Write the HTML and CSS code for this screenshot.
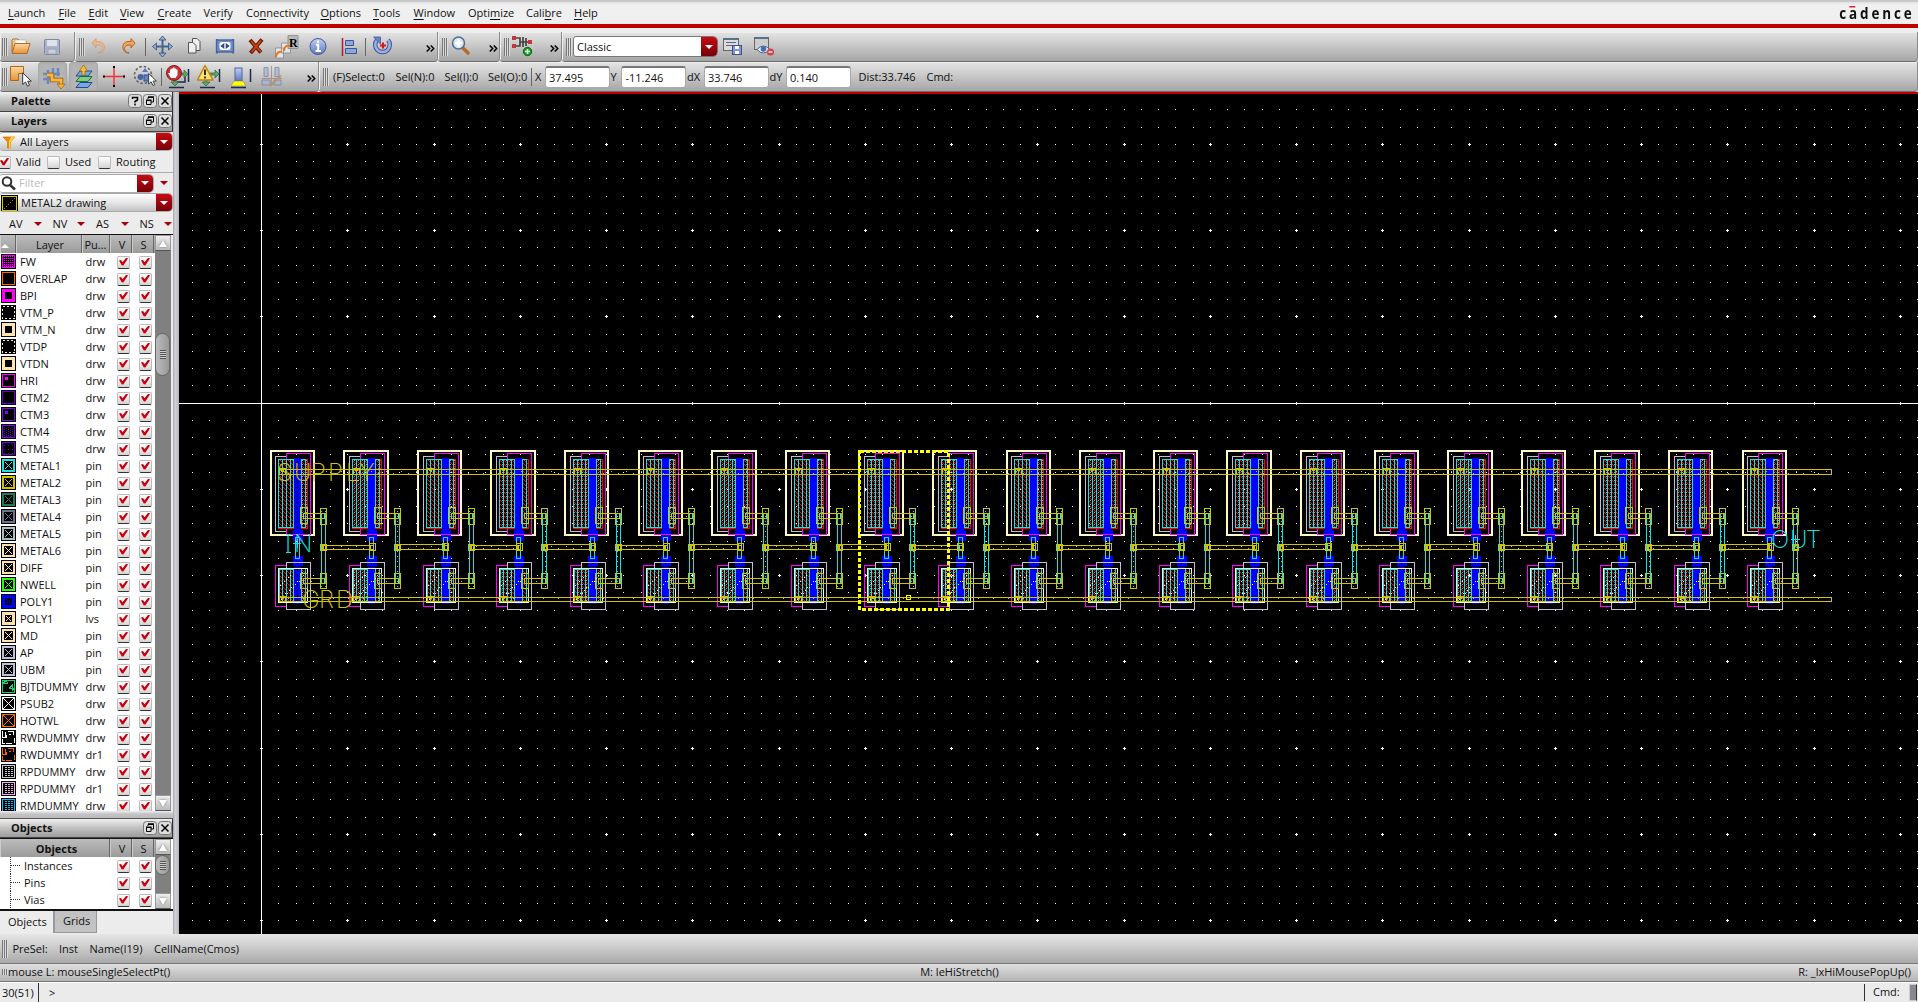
FILE: index.html
```html
<!DOCTYPE html>
<html lang="en">
<head>
<meta charset="utf-8">
<title>Layout Editor</title>
<link rel="stylesheet" href="styles.css">
</head>
<body>
<svg width="0" height="0" class="defs">
  <defs>
    <linearGradient id="blueG" x1="0" y1="0" x2="0" y2="1"><stop offset="0" stop-color="#c3d0f2"/><stop offset="1" stop-color="#5c78bd"/></linearGradient>
    <linearGradient id="orangeG" x1="0" y1="0" x2="0" y2="1"><stop offset="0" stop-color="#ffd9a0"/><stop offset="1" stop-color="#e8903a"/></linearGradient>
    <symbol id="grip" viewBox="0 0 6 18"><path d="M.5 0V18M2.5 0V18M4.5 0V18" stroke="#777" stroke-width="1"/><path d="M1.500 0V18M3.500 0V18M5.500 0V18" stroke="#ddd" stroke-width="1"/></symbol>
    <symbol id="more" viewBox="0 0 9 7"><path d="M.7 .5L3.700 3.500L.7 6.500M4.700 .5L7.700 3.500L4.700 6.500" stroke="#000" stroke-width="1.500" fill="none"/></symbol>
    <symbol id="float" viewBox="0 0 14 14"><rect x=".5" y=".5" width="13" height="13" rx="3" fill="#ddd" stroke="#777"/><path d="M5 3.500H10.500V8M5 3.500V5M3.500 6.500H8V10.500H3.500ZM8 8H10.500" stroke="#000" fill="none"/><path d="M5 3H11M3 6.300H8.500" stroke="#000" stroke-width="1.500"/></symbol>
    <symbol id="close" viewBox="0 0 14 14"><rect x=".5" y=".5" width="13" height="13" rx="3" fill="#ddd" stroke="#777"/><path d="M3.500 3.500L10.500 10.500M10.500 3.500L3.500 10.500" stroke="#000" stroke-width="1.500"/></symbol>
    <symbol id="help" viewBox="0 0 14 14"><rect x=".5" y=".5" width="13" height="13" rx="3" fill="#ddd" stroke="#777"/><path d="M4.500 5V3.500H9.500V6L7 7.500V8.500M7 9.500V11.500" stroke="#000" stroke-width="1.500" fill="none"/></symbol>
    <symbol id="cursor" viewBox="0 0 10 15"><path d="M.7 .8V12.500L3.500 10L5.500 14.200L7.500 13.200L5.700 9.200H9.300Z" fill="#fff" stroke="#222" stroke-width=".9"/></symbol>
  </defs>
</svg>

<div class="app">
  <nav class="menubar">
    <span style="width:50.500px"><u>L</u>aunch</span><span style="width:30px"><u>F</u>ile</span><span style="width:31.500px"><u>E</u>dit</span><span style="width:37.500px"><u>V</u>iew</span><span style="width:46px"><u>C</u>reate</span><span style="width:42.500px">Ver<u>i</u>fy</span><span style="width:74.500px">Co<u>n</u>nectivity</span><span style="width:52.500px"><u>O</u>ptions</span><span style="width:40.500px"><u>T</u>ools</span><span style="width:54.500px"><u>W</u>indow</span><span style="width:58px">Opti<u>m</u>ize</span><span style="width:48px">Cali<u>b</u>re</span><span><u>H</u>elp</span>
    <b class="brand">c<em>a</em>dence</b>
  </nav>

  <div class="toolbar top">
    <div class="group" style="width:75px">
      <svg class="grip"><use href="#grip"/></svg>
      <svg width="28" height="29" viewBox="10 0 28 29"><path d="M12 20V8l1-1h5l2 2h6v3" fill="url(#orangeG)" stroke="#b36a22"/><path d="M15 12V8h11v5" fill="#fff" stroke="#aaa" stroke-width=".6"/><path d="M12 21.500L15 11.500H30L27 21.500Z" fill="url(#orangeG)" stroke="#b36a22"/></svg>
      <svg width="32" height="29" viewBox="38 0 32 29"><rect x="44.500" y="7.500" width="15" height="15" rx="1" fill="#a9b2c8" stroke="#7d88a5"/><rect x="47" y="8" width="10" height="6" fill="#dfe2e8"/><rect x="48" y="17" width="8" height="5" fill="#c9cdd6" stroke="#8e97ae" stroke-width=".7"/></svg>
    </div>
    <div class="group" style="width:363px">
      <svg class="grip"><use href="#grip"/></svg>
      <svg width="26" height="29" viewBox="85 0 26 29"><path d="M98 21c6-1 7-8 0-8h-2v3l-4-5 4-4.500v3h3c8 1 7 12-1 11.500Z" fill="#e4b894" stroke="#cf976a" stroke-width=".7"/></svg>
      <svg width="34" height="29" viewBox="111 0 34 29"><path d="M129 21c-6-1-6-8 0-8h2v3l4-5-4-4.500v3h-3c-8 1-6 12 1 11.500Z" fill="#f2a555" stroke="#b05c17" stroke-width=".9"/></svg>
      <i class="sep"></i>
      <svg width="34" height="29" viewBox="146 0 34 29"><path d="M162.500 5V24M153 14.500H172" stroke="#46658a" stroke-width="2"/><path d="M162.500 4l-3.500 4h7ZM162.500 25l-3.500-4h7ZM152.500 14.500l4-3.500v7ZM172.500 14.500l-4-3.500v7Z" fill="#8fb0d4" stroke="#2e4f78" stroke-width=".8"/></svg>
      <svg width="30" height="29" viewBox="180 0 30 29"><path d="M192.500 6.500H197l3 3v9H192.500Z" fill="#eee" stroke="#555"/><path d="M188.500 10.500H193l3 3v7.500H188.500Z" fill="#eee" stroke="#555"/></svg>
      <svg width="33" height="29" viewBox="210 0 33 29"><rect x="216.500" y="8" width="17" height="12" fill="#6f8dc8" stroke="#45659f" stroke-width="1.400"/><path d="M217 8v-1M233 8v-1M217 20v1.500M233 20v1.500" stroke="#45659f" stroke-width="2"/><rect x="219.500" y="10" width="11" height="8" rx="2" fill="#fff"/><path d="M224.300 11v6l-4-3ZM225.700 11v6l4-3Z" fill="#2f4c87"/></svg>
      <svg width="28" height="29" viewBox="243 0 28 29"><path d="M250 8l11 12.500M262 7.500L250.500 21" stroke="#6a1c06" stroke-width="4"/><path d="M251 9l10 11M261 8.500L251.500 20" stroke="#c64413" stroke-width="1.800"/></svg>
      <svg width="35" height="29" viewBox="271 0 35 29"><path d="M275.500 16h8v10h-8ZM281.500 11h9v10h-9Z" fill="#e4e4e4" stroke="#888" stroke-width=".8"/><path d="M288 3.500h10v13h-10Z" fill="#b9b9b9" stroke="#888" stroke-width=".8"/><text x="289" y="14.500" class="svg-r">R</text><path d="M276 25c0-4 3-6 6-5M284 19c0-5 3-6 6-5" stroke="#e07b20" stroke-width="2" fill="none"/></svg>
      <svg width="30" height="29" viewBox="306 0 30 29"><circle cx="318" cy="14.500" r="8" fill="url(#blueG)" stroke="#3e55a0"/><path d="M318 8.500v2.500M316 12.800h2.200V19M315.500 19h5.500" stroke="#fff" stroke-width="2" fill="none"/></svg>
      <svg width="29" height="29" viewBox="336 0 29 29"><path d="M342.500 6V24" stroke="#b21c2c" stroke-width="1.500"/><path d="M345.500 8.500h8v5h-8ZM345.500 16.500h11v5h-11Z" fill="#8fa6d8" stroke="#3b5596"/></svg>
      <i class="sep"></i>
      <svg width="60" height="29" viewBox="366 0 60 29"><path d="M377 8a7.300 7.300 0 1 0 11 0" stroke="#3f57a0" stroke-width="4.500" fill="none"/><path d="M377 8a7.300 7.300 0 1 0 11 0" stroke="#9db0e0" stroke-width="2.500" fill="none"/><path d="M373.500 5h7v7Z" fill="#6d84c5" stroke="#3f57a0" stroke-width=".8"/><path d="M383 10.500v6M380 13.500h6" stroke="#e01414" stroke-width="2"/></svg>
      <svg class="more"><use href="#more"/></svg>
    </div>
    <div class="group" style="width:62px">
      <svg class="grip"><use href="#grip"/></svg>
      <svg width="41" height="29" viewBox="448 0 41 29"><path d="M463 16l5 5" stroke="#b66a28" stroke-width="3.500" stroke-linecap="round"/><circle cx="458.500" cy="11" r="6" fill="#d9e5f2" stroke="#526d93" stroke-width="1.500"/><path d="M458.500 7.500v7M455 11h7" stroke="#fff" stroke-width="2.500"/></svg>
      <svg class="more"><use href="#more"/></svg>
    </div>
    <div class="group" style="width:62px">
      <svg class="grip"><use href="#grip"/></svg>
      <svg width="40" height="29" viewBox="510 0 40 29"><path d="M514 6h6v8h-6M523 5v10M520 10h9M526 6v8" stroke="#444" stroke-width="1.700" fill="none"/><path d="M512 4h4v4h-4ZM512 12h4v4h-4ZM528 8h4v4h-4Z" fill="#c0363c"/><circle cx="527.500" cy="19.500" r="4.200" fill="#159b1f" stroke="#076b10"/><path d="M527.500 17v5M525 19.500h5" stroke="#fff" stroke-width="1.500"/></svg>
      <svg class="more"><use href="#more"/></svg>
    </div>
    <div class="group grow">
      <svg class="grip"><use href="#grip"/></svg>
      <div class="combo classic"><span>Classic</span><i class="arrow"></i></div>
      <svg width="31" height="29" viewBox="718 0 31 29"><rect x="723.500" y="6.500" width="15" height="12" fill="#ddd" stroke="#666"/><path d="M723 7h16" stroke="#52748d" stroke-width="2"/><path d="M726 10.500h10M726 13.500h6" stroke="#666"/><rect x="732.500" y="13.500" width="9" height="9" fill="#8295d6" stroke="#3d4f9d"/><path d="M735 14h4v3h-4ZM735 19h4v3h-4Z" fill="#fff"/></svg>
      <svg width="31" height="29" viewBox="749 0 31 29"><rect x="754.500" y="5.500" width="14" height="12" fill="#ccc" stroke="#666"/><path d="M754 6h15" stroke="#52748d" stroke-width="2"/><path d="M757 17.500q6-7 13 0q-7 7-13 0Z" fill="#e9eef7" stroke="#4a6596"/><circle cx="763.500" cy="17" r="2.800" fill="#456fae"/><circle cx="770.500" cy="20" r="3.600" fill="#d0454a"/><path d="M768.500 20h4" stroke="#fff" stroke-width="1.300"/></svg>
    </div>
  </div>

  <div class="toolbar second">
    <div class="group" style="width:319px">
      <svg class="grip"><use href="#grip"/></svg>
      <svg width="28" height="29" viewBox="10 0 28 29"><path d="M10.500 4.500h13v7h-5v7h-8Z" fill="url(#orangeG)" stroke="#b56517"/><use href="#cursor" x="22" y="10" width="10" height="15"/></svg>
      <svg class="pressed" width="29" height="29" viewBox="38 0 29 29"><path d="M48 8v14M53 6v14M58 6v8M43 12h17M43 17h14" stroke="#6d88c0" stroke-width="2.500"/><path d="M47 13h5v5h9v6" stroke="#9c5b08" stroke-width="4.500" fill="none"/><path d="M47 13h5v5h9v6" stroke="#f7b63c" stroke-width="2.800" fill="none"/><path d="M57 22h8l-4 5Z" fill="#f7b63c" stroke="#9c5b08" stroke-width=".7"/></svg>
      <svg class="pressed gap" width="29" height="29" viewBox="69 0 29 29"><path d="M83.500 24V9" stroke="#e8a626" stroke-width="3"/><path d="M76 25.500l4-5h12l-4 5Z" fill="#79a6e8" stroke="#234a8d"/><path d="M76 19.500l4-5h12l-4 5Z" fill="#7dcf7f" stroke="#1f7131"/><path d="M76 14l4-5h12l-4 5Z" fill="#79a6e8" stroke="#234a8d"/><path d="M79.500 9l4-6 4 6h-2.500v4h-3V9Z" fill="#f9c03e" stroke="#9c6b08" stroke-width=".8"/></svg>
      <svg width="31" height="29" viewBox="98 0 31 29"><path d="M114 4V25M103 14.500H125" stroke="#e33" stroke-width="1.400"/><path d="M113 4h2v2h-2ZM113 23h2v2h-2ZM103 13.500h2v2h-2ZM123 13.500h2v2h-2Z" fill="#000"/></svg>
      <svg width="32" height="29" viewBox="129 0 32 29"><circle cx="143" cy="13" r="8.500" fill="none" stroke="#666" stroke-width="1.600" stroke-dasharray="2.500 2"/><circle cx="140.500" cy="15" r="3" fill="#4864a4"/><rect x="144" y="13" width="6" height="6" fill="#6681be" stroke="#364f8d"/><path d="M142 10l3-4 3 4Z" fill="#5c78b7"/><use href="#cursor" x="148" y="10" width="9" height="15"/></svg>
      <i class="sep"></i>
      <svg width="32" height="29" viewBox="163 0 32 29"><path d="M178 20h8v-8M189.500 7v13M170 25.500h15" stroke="#20284c" stroke-width="1.500" fill="none"/><path d="M180 11h5l0-3 4 4-4 4v-3h-5ZM175 17v3h-3l4 4 4-4h-3v-3Z" fill="#5ca46a" stroke="#256b35" stroke-width=".7"/><circle cx="175" cy="11" r="7.500" fill="#c73038" stroke="#8a1820"/><path d="M172 16l-3-5h2V7.500h1.400V6.500H174V5.500h1.500v1H177v1h1.500V13l-2 3Z" fill="#fff"/></svg>
      <svg width="31" height="29" viewBox="195 0 31 29"><path d="M220.500 7v13M201 25.500h15" stroke="#20284c" stroke-width="1.500"/><path d="M211 11h5V8l4 4-4 4v-3h-5ZM206 17v3h-3l4 4 4-4h-3v-3Z" fill="#5ca46a" stroke="#256b35" stroke-width=".7"/><path d="M206 3.500L214 18H198.500Z" fill="#ffe36f" stroke="#c08017" stroke-width="1.500" stroke-linejoin="round"/><path d="M206 7.500v5.500M206 14.500v2" stroke="#111" stroke-width="1.700"/></svg>
      <svg width="31" height="29" viewBox="226 0 31 29"><rect x="236" y="6" width="7" height="13" fill="url(#blueG)" stroke="#4a65a3"/><path d="M235 19h9l3 5h-15Z" fill="#ff0" stroke="#888" stroke-width=".6"/><path d="M232 25.500h15M251.500 7v13" stroke="#20284c" stroke-width="1.500"/></svg>
      <svg width="51" height="29" viewBox="256 0 51 29" opacity=".7"><path d="M264 5.500h4v9h-4ZM275 5.500h4v9h-4ZM262 18h8v5h-8ZM274 18h7v5h-7Z" fill="#a9b5cf" stroke="#6b7ba0"/><path d="M271.500 4v20M262 16.500h20" stroke="#a77"/><path d="M270 24L281 13.500" stroke="#b08a4a" stroke-width="2"/></svg>
      <svg class="more"><use href="#more"/></svg>
    </div>
    <div class="group grow">
      <svg class="grip"><use href="#grip"/></svg>
      <span style="width:62.500px;margin-left:4px">(F)Select:0</span><span style="width:49px">Sel(N):0</span><span style="width:43.500px">Sel(I):0</span><span style="width:43px">Sel(O):0</span>
      <i class="sep" style="margin-right:3px"></i>
      <span style="width:9.500px">X</span><div class="field">37.495</div>
      <span style="width:10.500px;margin-left:1px">Y</span><div class="field">-11.246</div>
      <span style="width:16.500px;margin-left:1px">dX</span><div class="field">33.746</div>
      <span style="width:16px;margin-left:1px">dY</span><div class="field">0.140</div>
      <span style="width:68px;margin-left:8px">Dist:33.746</span><span>Cmd:</span>
    </div>
  </div>

  <main class="work">
    <aside class="side">
      <div class="title"><b>Palette</b><svg><use href="#help"/></svg><svg><use href="#float"/></svg><svg><use href="#close"/></svg></div>
      <div class="title"><b>Layers</b><svg><use href="#float"/></svg><svg><use href="#close"/></svg></div>
      <div class="combo all">
        <svg width="20" height="18" viewBox="0 0 20 18"><path d="M3 4h12l-4.500 5v6h-3V9Z" fill="#f08a10" stroke="#c26a06" stroke-width=".6"/><path d="M11 4h4l-4.500 5v6H9V8Z" fill="#ffd23c"/></svg>
        <span>All Layers</span><i class="arrow"></i>
      </div>
      <div class="checks"><i class="cb on"></i><span style="width:31px">Valid</span><i class="cb"></i><span style="width:33px">Used</span><i class="cb"></i><span>Routing</span></div>
      <div class="filter">
        <div class="combo"><svg width="19" height="18" viewBox="0 0 19 18"><circle cx="7" cy="7.500" r="4.300" fill="none" stroke="#333" stroke-width="2"/><path d="M10 11l5 4.500" stroke="#333" stroke-width="2.600"/></svg><span>Filter</span><i class="arrow"></i></div>
        <i class="tri"></i>
      </div>
      <div class="combo current">
        <svg width="21" height="18" viewBox="0 0 21 18"><rect x="1" y="1" width="17" height="17" fill="#000"/><rect x="2.500" y="2.500" width="14" height="14" fill="none" stroke="#d8c800"/><path d="M4 15L15 4" stroke="#d8c800" stroke-dasharray="1 1.800"/></svg>
        <span>METAL2 drawing</span><i class="arrow"></i>
      </div>
      <div class="vis"><span>AV</span><i class="tri"></i><span>NV</span><i class="tri"></i><span>AS</span><i class="tri"></i><span>NS</span><i class="tri"></i></div>
      <div class="table layers">
        <div class="cols">
          <div class="thead"><span class="c0"><i></i></span><span class="c1">Layer</span><span class="c2">Pu...</span><span class="c3">V</span><span class="c4">S</span></div>
          <div class="rows" id="layers"></div>
        </div>
        <div class="scroll"><i class="btn up"></i><i class="thumb"></i><i class="btn down"></i></div>
      </div>
      <div class="splitter"></div>
      <div class="title"><b>Objects</b><svg><use href="#float"/></svg><svg><use href="#close"/></svg></div>
      <div class="table objects">
        <div class="cols">
          <div class="thead"><span class="cobj">Objects</span><span class="c3">V</span><span class="c4">S</span></div>
          <div class="rows" id="objects"></div>
        </div>
        <div class="scroll"><i class="btn up"></i><i class="thumb"></i><i class="btn down"></i></div>
      </div>
      <div class="tabs"><span class="active">Objects</span><span>Grids</span></div>
    </aside>
    <div class="divider"></div>
    <svg id="canvas" class="canvas" width="1739" height="842" viewBox="179 92 1739 842"></svg>
  </main>

  <div class="status"><svg class="grip"><use href="#grip"/></svg><span style="width:46.500px">PreSel:</span><span style="width:30.500px">Inst</span><span style="width:64.500px">Name(I19)</span><span>CellName(Cmos)</span></div>
  <div class="mouse"><i class="mini-grip"></i><span>mouse L: mouseSingleSelectPt()</span><span>M: leHiStretch()</span><span>R: _lxHiMousePopUp()</span></div>
  <div class="prompt"><span class="count">30(51)</span><span class="gt">&gt;</span><span class="cmd">Cmd:</span><i></i></div>
</div>
<script src="script.js"></script>
</body>
</html>
```
FILE: styles.css
```css
* { box-sizing: border-box; }
html, body { margin: 0; }
body { width: 1918px; height: 1002px; overflow: hidden; background: #ececec; font: 11px/16px "Open Sans", "Noto Sans", sans-serif; color: #111; }
.defs { position: absolute; }
.app { display: flex; flex-direction: column; height: 1002px; white-space: nowrap; }
svg { display: block; flex: none; }
i { display: block; flex: none; }

.menubar { display: flex; height: 32px; padding: 4px 7px 0 8px; background: linear-gradient(#c8c8c8 0 2px, #e0e0e0 2px, #f0f0f0 5px, #efefef 24px, #bf0000 24px 28px, #eee 28px); }
.menubar span { flex: none; line-height: 18px; }
.menubar u { text-underline-offset: 2px; text-decoration-thickness: 1px; text-decoration-skip-ink: none; }
.brand { margin-left: auto; font: 700 16px/19px "Open Sans", sans-serif; letter-spacing: 3.400px; transform: scaleX(.84); transform-origin: right; margin-right: -3px; }
.brand em { display: inline-block; height: 19px; font-style: normal; background: linear-gradient(#e0202c, #e0202c) 0 2px / 7px 1.500px no-repeat; }

.toolbar { display: flex; height: 30px; background: #ddd; }
.group { display: flex; align-items: center; flex: none; height: 30px; padding-left: 2px; background: linear-gradient(#e4e4e4, #c9c9c9 45%, #a6a6a6); border-bottom: 1px solid #6d6d6d; border-right: 1px solid #8b8b8b; border-radius: 0 0 4px 3px; box-shadow: inset 1px 1px #eee; }
.group.grow { flex: 1; }
.group > span { flex: none; }
.grip { width: 6px; height: 18px; margin-right: 2px; }
.group + .group > .grip { margin-left: 2px; margin-right: 0; }
.sep { width: 1px; height: 18px; background: #666; }
.more { width: 9px; height: 7px; margin-top: 4px; }
.pressed { background: #b4b4b4; border-radius: 4px; box-shadow: inset 0 0 3px #999; }
.gap { margin-left: 2px; }
.field { width: 65px; height: 22px; padding: 0 3.500px; line-height: 20px; background: #fff; border: 1px solid #aaa; border-top: 2px solid #777; border-radius: 3px; }

.combo { display: flex; align-items: center; flex: none; overflow: hidden; background: linear-gradient(#fff, #e6e6e6 50%, #c4c4c4); border: 1px solid #aaa; border-left: 0; border-radius: 3px 5px 5px 3px; }
.combo span { flex: 1; }
.combo.classic { width: 145px; height: 21px; margin-left: 1px; background: #fff; border: 1px solid #777; padding-left: 3px; }
.arrow { align-self: stretch; display: flex; align-items: center; justify-content: center; width: 16px; background: linear-gradient(#c80b12, #760008); }
.arrow::before { content: ""; border: 4px solid transparent; border-top-color: #fff; border-bottom: 0; }

.work { display: flex; height: 842px; flex: none; }
.side { display: flex; flex-direction: column; width: 173px; background: #ececec; overflow: hidden; }
.title { display: flex; align-items: center; flex: none; height: 20px; padding: 0 0 1px 11px; background: linear-gradient(#f0f0f0, #c9c9c9 40%, #9c9c9c); border-bottom: 1px solid #444; border-right: 1px solid #333; }
.title b { flex: 1; }
.title svg { width: 14px; height: 14px; margin-left: 1px; }
.combo.all { height: 19px; margin-bottom: 1px; }
.checks { display: flex; align-items: center; height: 21px; flex: none; border-bottom: 1px solid #aaa; }
.checks .cb { margin-right: 5px; }
.checks .cb:first-child { margin-left: -2px; }
.cb { width: 13px; height: 13px; background: linear-gradient(#fff, #d4d4d4); border: 1px solid #bbb; border-bottom: 1px solid #333; border-radius: 2px; display: block; }
.cb.on::after { content: ""; display: block; width: 9px; height: 8px; margin: 1px; background: #c8000d; clip-path: polygon(0 38%, 22% 32%, 40% 58%, 82% 0, 100% 12%, 48% 100%, 30% 98%); }
.filter { display: flex; align-items: center; height: 20px; flex: none; }
.filter .combo { width: 154px; height: 19px; background: #fff; color: #bbb; }
.tri { width: 8px; height: 4px; border: 4px solid transparent; border-top-color: #a8000a; border-bottom: 0; }
.filter .tri { margin-left: 6px; }
.combo.current { height: 19px; margin-bottom: 1px; }
.vis { display: flex; align-items: center; height: 21px; flex: none; padding-left: 9px; }
.vis span { width: 24px; flex: none; }
.vis .tri { margin: 0 11px 0 0.500px; }

.table { display: flex; flex: none; border-top: 1px solid #111; }
.layers { height: 577px; }
.objects { height: 71px; background: #fff; }
.cols { width: 155px; overflow: hidden; background: #fff; }
.thead { display: flex; height: 18px; line-height: 19px; background: linear-gradient(#bcbcbc, #9b9b9b); text-align: center; }
.thead span { flex: none; border-right: 1px solid #666; box-shadow: inset 1px 0 #ccc; }
.c0 { width: 16px; }
.c0 i { width: 0; margin: 9px 0 0 1px; border: 4px solid transparent; border-bottom-color: #fff; border-top: 0; }
.c1 { width: 66px; padding-left: 3px; }
.c2 { width: 28px; }
.c3 { width: 22px; padding-left: 3px; }
.c4 { width: 22px; padding-left: 2px; }
.cobj { width: 110px; font-weight: 700; padding-left: 4px; }
.row { display: flex; align-items: center; height: 17px; padding-left: 1px; }
.row svg { width: 15px; height: 15px; margin-right: 4px; }
.row .name { width: 65.500px; flex: none; }
.row .purpose { width: 31.500px; flex: none; }
.row .cb { margin-right: 9px; margin-top: 1px; }
.objects .row { padding-left: 10px; }
.objects .row svg { width: 10px; height: 17px; margin-right: 4px; }
.objects .row .name { width: 93px; }
.scroll { display: flex; flex-direction: column; width: 16px; background: #808080; }
.btn { height: 16px; display: flex; align-items: center; justify-content: center; background: linear-gradient(#eee, #bbb); border: 1px solid #999; border-bottom-color: #555; }
.up::before { content: ""; border: 4px solid transparent; border-bottom: 7px solid #fff; border-top: 0; filter: drop-shadow(0 0 1px #777); }
.down::before { content: ""; border: 4px solid transparent; border-top: 7px solid #fff; border-bottom: 0; filter: drop-shadow(0 0 1px #777); }
.thumb { width: 15px; height: 43px; border: 1px solid #666; border-radius: 8px; background: linear-gradient(90deg, #bbb, #999); display: flex; align-items: center; justify-content: center; }
.thumb::before { content: ""; width: 6px; height: 9px; background: repeating-linear-gradient(#555 0 1px, #ccc 1px 2px); }
.layers .thumb { margin-top: 82px; }
.objects .thumb { height: 20px; }
.scroll .down { margin-top: auto; }
.splitter { height: 8px; flex: none; background: linear-gradient(#eee, #c4c4c8 3px, #bbb); border-bottom: 1px solid #555; }
.splitter + .title { height: 19px; padding-bottom: 0; }
.tabs { display: flex; flex: 1; border-top: 2px solid #111; }
.tabs span { height: 22px; line-height: 21px; padding: 0 8px; background: #c2c2c2; border: 1px solid #999; border-top: 0; }
.tabs span:last-child { width: 43px; line-height: 19px; }
.tabs .active { width: 54px; background: #ececec; border-bottom: 0; border-left: 0; }
.divider { width: 6px; flex: none; background: linear-gradient(90deg, #a8a8ac, #d0d0d6 40%, #b5b5ba); }
.canvas { background: #000; }

.label { font: 200 24px "Inter", "Noto Sans", sans-serif; }
.svg-r { font: 700 12px "Liberation Serif", serif; }

.status { display: flex; align-items: center; height: 30px; flex: none; padding-left: 2px; background: linear-gradient(#e6e6e6, #c9c9c9 50%, #a9a9a9); border-bottom: 1px solid #777; }
.status .grip { margin-right: 4.500px; }
.status span { flex: none; }
.mouse { display: grid; grid-template-columns: 7px 1fr 1fr 1fr; align-items: center; height: 18px; flex: none; padding: 0 7px 1px 1px; background: linear-gradient(#e0e0e0, #b4b4b4); border-bottom: 1px solid #777; }
.mini-grip { width: 6px; height: 6px; margin-left: 1px; background: repeating-linear-gradient(90deg, #777 0 1px, #ddd 1px 2px); }
.mouse span:nth-child(3) { text-align: center; }
.mouse span:nth-child(4) { text-align: right; }
.prompt { display: flex; align-items: center; height: 20px; background: #ebebeb; border-top: 1px solid #fff; }
.count { width: 39px; height: 19px; line-height: 20px; padding-left: 2px; border-right: 1px solid #333; }
.gt { flex: 1; padding-left: 10px; }
.cmd { width: 45px; height: 17px; padding-left: 8px; border-left: 1px solid #333; }
.prompt i { width: 8px; height: 17px; background: #88888e; border: 1px solid #ccc; border-right-color: #333; margin-right: 1px; }
```
FILE: script.js
```js
// Layer palette: name, purpose, colour, swatch style
const layers = [
  ["FW", "drw", "#f0f", "grid"], ["OVERLAP", "drw", "#f60", "line"], ["BPI", "drw", "#f0f", "thick"],
  ["VTM_P", "drw", "#ffe3b0", "dash"], ["VTM_N", "drw", "#ffe3b0", "thick"], ["VTDP", "drw", "#ffe3b0", "dash"],
  ["VTDN", "drw", "#ffe3b0", "thick"], ["HRI", "drw", "#f0f", "dot"], ["CTM2", "drw", "#60c", "line"],
  ["CTM3", "drw", "#7a0be8", "dot"], ["CTM4", "drw", "#7a0be8", "dots"], ["CTM5", "drw", "#60c", "sparse"],
  ["METAL1", "pin", "#1fe0e0", "pin"], ["METAL2", "pin", "#d0c400", "pin"], ["METAL3", "pin", "#1f7a55", "pin"],
  ["METAL4", "pin", "#707090", "pin"], ["METAL5", "pin", "#a8c0c0", "pin"], ["METAL6", "pin", "#ffe0b0", "pin"],
  ["DIFF", "pin", "#ffe0b0", "pin"], ["NWELL", "pin", "#2f0", "pin"], ["POLY1", "pin", "#00f", "small"],
  ["POLY1", "lvs", "#ffe0b0", "small"], ["MD", "pin", "#ffe0b0", "pin"], ["AP", "pin", "#c0c0d8", "pin"],
  ["UBM", "pin", "#c0c0d8", "pin"], ["BJTDUMMY", "drw", "#1fd060", "wedge"], ["PSUB2", "drw", "#fff", "cross"],
  ["HOTWL", "drw", "#f60", "cross"], ["RWDUMMY", "drw", "#fff", "maze"], ["RWDUMMY", "dr1", "#f60", "maze"],
  ["RPDUMMY", "drw", "#ccc", "weave"], ["RPDUMMY", "dr1", "#f0b0f0", "weave"], ["RMDUMMY", "drw", "#12b8ff", "weave"]
];

function swatch(color, kind) {
  const stroke = (d, extra = "") => `<path d="${d}" fill="none" stroke="${color}" ${extra}/>`;
  const frame = stroke("M1.5 1.5H13.5V13.5H1.5Z");
  const art = {
    line: frame,
    grid: frame + stroke("M3.500 2V13M5.500 2V13M7.500 2V13M9.500 2V13M11.500 2V13", 'stroke-dasharray="1 1"') + stroke("M2 4.500H13M2 8.500H13M2 11.500H13", 'opacity=".5"'),
    thick: stroke("M2.500 2.500H12.500V12.500H2.500Z", 'stroke-width="3"'),
    dash: stroke("M1.500 1.500H13.500V13.500H1.500Z", 'stroke-dasharray="2 2"'),
    dot: frame + `<rect x="4" y="4" width="3" height="3" fill="${color}"/>`,
    dots: frame + stroke("M3.500 3V13M7.500 3V13M11.500 3V13M5.500 4V13M9.500 4V13", 'stroke-dasharray="1 1" opacity=".8"'),
    sparse: frame + stroke("M3.500 4V13M7.500 4V13M11.500 4V13", 'stroke-dasharray="1 3"'),
    pin: `<path d="M1 1H14V14H1ZM3 3V12H12V3Z" fill-rule="evenodd" fill="${color}"/>` + stroke("M4 4L11 11M11 4L4 11"),
    small: `<path d="M1 1H14V14H1ZM4 4V11H11V4Z" fill-rule="evenodd" fill="${color}"/>` + stroke("M5 5L10 10M10 5L5 10"),
    cross: frame + stroke("M2 2L13 13M13 2L2 13"),
    wedge: frame + stroke("M2 4L5 2L7 4M2 4.500H7M8 9.500L11 6.500V9.500H8M11 12L13 9"),
    maze: stroke("M1.500 1V7H4.500V2M7 1.500H12M12.500 1V5M1.500 9V13.500H4M5 13.500H11M13.500 8V13M5 5V8M8 4H10"),
    weave: frame + stroke("M4.500 1V14M7.500 1V14M10.500 1V14", 'stroke-width="2" stroke-dasharray="1 1"')
  }[kind];
  return `<svg viewBox="0 0 15 15" shape-rendering="crispEdges"><rect width="15" height="15" fill="#000"/>${art}</svg>`;
}

const boxes = '<i class="cb on"></i><i class="cb on"></i>';
document.getElementById("layers").innerHTML = layers.map(([name, purpose, color, kind]) =>
  `<div class="row">${swatch(color, kind)}<span class="name">${name}</span><span class="purpose">${purpose}</span>${boxes}</div>`).join("");
document.getElementById("objects").innerHTML = ["Instances", "Pins", "Vias"].map(name =>
  `<div class="row"><svg viewBox="0 0 10 17"><path d="M.5 0V17M1 8.500H10" stroke="#333" stroke-dasharray="1 1"/></svg><span class="name">${name}</span>${boxes}</div>`).join("");

// Layout canvas, in window pixels
const out = [];
const px = Math.round;
const fill = (color, d) => out.push(`<path fill="${color}" d="${d}"/>`);
const block = (x, y, x2, y2) => `M${px(x)} ${y}H${px(x2)}V${y2}H${px(x)}Z`;
const box = (color, x, y, x2, y2, w = 1) => {
  const h = w / 2;
  out.push(`<path fill="none" stroke="${color}" stroke-width="${w}" d="M${px(x) + h} ${y + h}H${px(x2) - h}V${y2 - h}H${px(x) + h}Z"/>`);
};
const line = (color, d) => out.push(`<path fill="none" stroke="${color}" d="${d}"/>`);

const Y = "#d0c40a", C = "#1fe0e0", B = "#00f", M = "#f0f", G = "#c0c0d0", W = "#fffac8", R = "#f00";

out.push(`<defs>
  <pattern id="hatch" width="4" height="4" patternUnits="userSpaceOnUse"><path fill="${R}" d="M0 0h1v1h-1zM1 1h1v1h-1zM2 2h1v1h-1zM3 3h1v1h-1z"/><path fill="${C}" d="M2 0h1v1h-1z"/></pattern>
  <pattern id="vdots" width="4" height="5" patternUnits="userSpaceOnUse"><rect width="1" height="1" x="1" y="1" fill="${C}"/></pattern>
  <pattern id="hdots" width="15" height="5" patternUnits="userSpaceOnUse"><path fill="${Y}" d="M3 3h1v1h-1zM11 1h1v1h-1z"/></pattern>
</defs>`);

let dots = "";
for (let i = -4; i <= 96; i++) {
  for (let j = -17; j <= 30; j++) {
    const x = px(261 + 17.25 * i), y = px(402.7 + 17.25 * j);
    dots += `M${x} ${y}h1v1h-1z`;
    if (i % 5 === 0 && j % 5 === 0) dots += `M${x - 1} ${y}h3v1h-3zM${x} ${y - 1}h1v3h-1z`;
  }
}
fill("#fff", dots);
fill("#fff", "M261 94h1V934h-1zM179 403H1918v1H179z");

const count = 21;
for (let i = 0; i < count; i++) {
  const w = 269.6 + 73.6 * i;
  const X = v => w + v - 269.6 + 0.4;
  const P = v => px(X(v));
  // p-type device
  box(W, w, 450, w + 45.4, 536, 2);
  line(G, `M${P(286)} 456.500H${P(275) + .5}V531.500H${P(286)}`);
  box(M, X(286), 453, X(311), 535);
  fill("url(#hatch)", block(X(279), 460, X(294), 528) + block(X(301), 460, X(307), 528));
  box(R, X(301), 459, X(308), 529);
  line(R, `M${P(278)} 528.500H${P(294)}`);
  for (const v of [278, 282, 286, 290, 293, 301, 305]) line(C, `M${P(v) + .5} 459V528`);
  line(C, `M${P(278)} 459.500H${P(294)}M${P(278)} 527.500H${P(294)}M${P(301)} 459.500H${P(306)}M${P(301)} 527.500H${P(306)}`);
  fill(B, block(X(294), 458, X(301), 531));
  fill(B, block(X(293), 530, X(303), 541) + block(X(293), 556, X(303), 566) + block(X(294), 567, X(301), 604));
  line(M, `M${P(286)} 534.500H${P(311)}`);
  line("#000", `M${P(296)} 535.500h1m1 0h1M${P(296)} 561.500h1m1 0h1M${P(297)} 563.500h1`);
  if (i === 0) out.push(`<path stroke="#000" stroke-dasharray="3 2" d="M${P(297) + .5} 461V530M${P(297) + .5} 569V602"/>`);
  // n-type device
  line(M, `M${P(286)} 565.500H${P(275) + .5}V606.500H${P(286)}`);
  box(G, X(286), 562, X(311), 610);
  fill("url(#hatch)", block(X(279), 570, X(294), 601) + block(X(301), 570, X(306), 601));
  for (const v of [279, 282, 286, 290, 293, 301, 305]) line(C, `M${P(v) + .5} 569V601`);
  line(C, `M${P(279)} 569.500H${P(294)}M${P(279)} 601.500H${P(294)}`);
  box(W, X(278), 568, X(308), 603);
  let diag = "";
  for (let k = 0; k < 12; k++) diag += `M${P(281) + k * 2} ${599 - k * 2 - (k % 3)}h1v1h-1z`;
  for (let k = 0; k < 6; k++) diag += `M${P(280) + k * 2} ${585 - k * 2}h1v1h-1z`;
  fill(W, diag);
  // gate and output wiring
  box(C, X(295), 537, X(300), 559);
  box(C, X(321), 513, X(326), 584);
  fill("url(#vdots)", block(X(321), 510, X(326), 587));
  for (const [t, b, ct, cb] of [[513, 519, 507, 524], [578, 584, 573, 589]]) {
    box(Y, X(303), t, X(325), b);
    fill("url(#hdots)", block(X(304), t + 1, X(324), b - 1));
    box(Y, X(300), ct, X(308), cb);
    box(Y, X(320), ct + (ct < 550 ? 1 : 0), X(327), cb + (ct < 550 ? 1 : 0));
  }
  box(Y, X(320), 544, X(327), 551);
  box(Y, X(322), 545, X(326), 550);
  if (i > 0) {
    box(Y, X(294.600), 543, X(301.600), 551);
    box(Y, X(296), 545, X(300), 550);
  }
  if (i < count - 1) {
    box(Y, X(323), 544 + (i % 2 ? 0 : 1), X(371), 550);
    fill("url(#hdots)", block(X(328), 545, X(367), 549));
  }
  for (const [t, b] of [[468, 475], [596, 602]]) {
    box(Y, X(279), t, X(286), b);
    line(Y, `M${P(281)} ${t + 2}.500H${P(284)}`);
  }
}
for (const [t, b] of [[469, 475], [597, 602]]) {
  box(Y, 279, t, 1832, b);
  fill("url(#hdots)", block(280, t + 1, 1831, b - 1));
}

// Selected instance
out.push('<rect x="859.500" y="451.500" width="89" height="158" fill="none" stroke="#ff0" stroke-width="3" stroke-dasharray="4 2"/>');
box("#ff0", 906, 595, 911, 600);

// Net labels
const label = (text, xs, y, color) =>
  out.push(`<text class="label" x="${xs}" y="${y}" fill="${color}">${text}</text>`);
label("SUPPLY", "277 294 311 328 346 359", 481, Y);
label("GRD", "302 319 336", 608, Y);
label("IN", "285 294", 552, C);
label("OUT", "1771 1790 1806", 548, C);
line(C, "M286 534.500h5M286 552.500h5M293 543.500h8M297.500 539v9M1791 539.500h9M1795.500 535v9");

fill("#c00000", "M179 92H1918V94H179z");
document.getElementById("canvas").innerHTML = `<g shape-rendering="crispEdges">${out.join("")}</g>`;
```
